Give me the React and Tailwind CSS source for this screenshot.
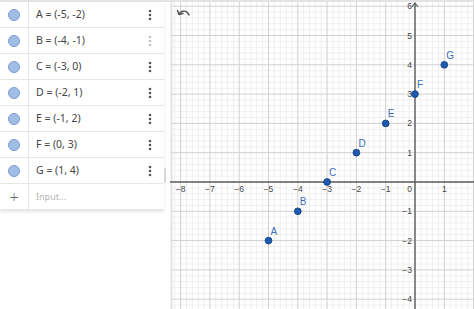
import React from "react";

const points = [
  { n: "A", x: -5, y: -2 },
  { n: "B", x: -4, y: -1 },
  { n: "C", x: -3, y: 0 },
  { n: "D", x: -2, y: 1 },
  { n: "E", x: -1, y: 2 },
  { n: "F", x: 0, y: 3 },
  { n: "G", x: 1, y: 4 },
];

const OX = 415;
const OY = 182;
const U = 29.3;

function Dots({ light }) {
  return (
    <svg width="4" height="12" viewBox="0 0 4 12">
      <g fill={light ? "#c4c4c4" : "#555"}>
        <circle cx="2" cy="2" r="1.3" />
        <circle cx="2" cy="6" r="1.3" />
        <circle cx="2" cy="10" r="1.3" />
      </g>
    </svg>
  );
}

function Graph() {
  const minor = [];
  const major = [];
  for (let i = -60; i <= 60; i++) {
    const x = OX + (i * U) / 5;
    if (x < 170 || x > 474) continue;
    (i % 5 === 0 ? major : minor).push(
      <line key={"x" + i} x1={x} y1={0} x2={x} y2={309} />
    );
  }
  for (let i = -60; i <= 60; i++) {
    const y = OY + (i * U) / 5;
    if (y < 0 || y > 309) continue;
    (i % 5 === 0 ? major : minor).push(
      <line key={"y" + i} x1={170} y1={y} x2={474} y2={y} />
    );
  }
  const xl = [];
  for (let k = -8; k <= 1; k++) {
    if (k === 0) continue;
    xl.push(
      <text key={k} x={OX + k * U} y={OY + 10} textAnchor="middle">
        {k < 0 ? "\u2212" + -k : k}
      </text>
    );
  }
  const yl = [];
  for (let k = -4; k <= 6; k++) {
    if (k === 0) continue;
    yl.push(
      <text key={k} x={OX - 3} y={OY - k * U + 3} textAnchor="end">
        {k < 0 ? "\u2212" + -k : k}
      </text>
    );
  }
  return (
    <svg
      className="block"
      width="304"
      height="307"
      viewBox="170 2 304 307"
    >
      <rect x="170" y="0" width="304" height="309" fill="#ffffff" />
      <g stroke="#efefef" strokeWidth="1">{minor}</g>
      <g stroke="#d0d0d0" strokeWidth="1">{major}</g>
      <line x1="171.5" y1="0" x2="171.5" y2="309" stroke="#e4e4e4" strokeWidth="2" />
      <g stroke="#5f5f5f" strokeWidth="1.4">
        <line x1="170" y1={OY} x2="474" y2={OY} />
        <line x1={OX} y1="3" x2={OX} y2="309" />
      </g>
      <path d={`M${OX - 3} 7 L${OX} 3 L${OX + 3} 7`} fill="none" stroke="#5f5f5f" strokeWidth="1.2" />
      <g
        fontSize="8.5"
        fill="#444"
        fontFamily="'Liberation Sans', Arial, sans-serif"
      >
        {xl}
        {yl}
        <text x={OX - 3} y={OY + 10} textAnchor="end">0</text>
      </g>
      <g fontSize="10" fill="#3d6fb8" fontFamily="'Liberation Sans', Arial, sans-serif">
        {points.map((p) => (
          <text key={p.n} x={OX + p.x * U + 2} y={OY - p.y * U - 6}>
            {p.n}
          </text>
        ))}
      </g>
      {points.map((p) => (
        <circle
          key={p.n}
          cx={OX + p.x * U}
          cy={OY - p.y * U}
          r="3.4"
          fill="#1d5bb0"
          stroke="#0d3a7a"
          strokeWidth="0.8"
        />
      ))}
      <g transform="translate(176 8)" fill="none" stroke="#555" strokeWidth="1.5" strokeLinecap="round" strokeLinejoin="round">
        <path d="M3 6 C6 2 11 2 13 7" />
        <path d="M1.5 2.5 L3 6.5 L7 5.5" />
      </g>
    </svg>
  );
}

export default function App() {
  return (
    <div
      className="w-[474px] h-[309px] overflow-hidden bg-white flex flex-col"
      style={{ fontFamily: "'Noto Sans', 'Open Sans', sans-serif" }}
    >
      <div className="h-[2px] bg-[#e3e3e3] shrink-0" />
      <div className="flex flex-1 min-h-0">
        <div className="w-[170px] shrink-0 flex flex-col">
          <div className="w-[164px] relative shadow-[0_2px_3px_rgba(0,0,0,0.10)]">
            {points.map((p) => (
              <div key={p.n} className="h-[26px] flex border-b border-[#e6e6e6]">
                <div className="w-[29px] border-r border-[#e6e6e6] flex items-center justify-center">
                  <div className="w-[12px] h-[12px] rounded-full bg-[#a0bde8] border border-[#7b9dd2]" />
                </div>
                <div className="flex-1 flex items-center pl-[7px] text-[10.5px] text-[#444]">
                  {p.n} = ({p.x}, {p.y})
                </div>
                <div className="w-[28px] flex items-center justify-center">
                  <Dots light={p.n === "B"} />
                </div>
              </div>
            ))}
            <div className="h-[26px] flex border-b border-[#e6e6e6]">
              <div className="w-[29px] border-r border-[#e6e6e6] flex items-center justify-center text-[#666] text-[16px] font-light">
                +
              </div>
              <div className="flex-1 flex items-center pl-[7px] text-[9px] text-[#b5b5b5]">
                Input...
              </div>
            </div>
          </div>
          <div className="absolute left-[164px] top-[168px] w-[2px] h-[15px] bg-[#d6d6d6] rounded" />
        </div>
        <div className="flex-1 min-w-0">
          <Graph />
        </div>
      </div>
    </div>
  );
}
